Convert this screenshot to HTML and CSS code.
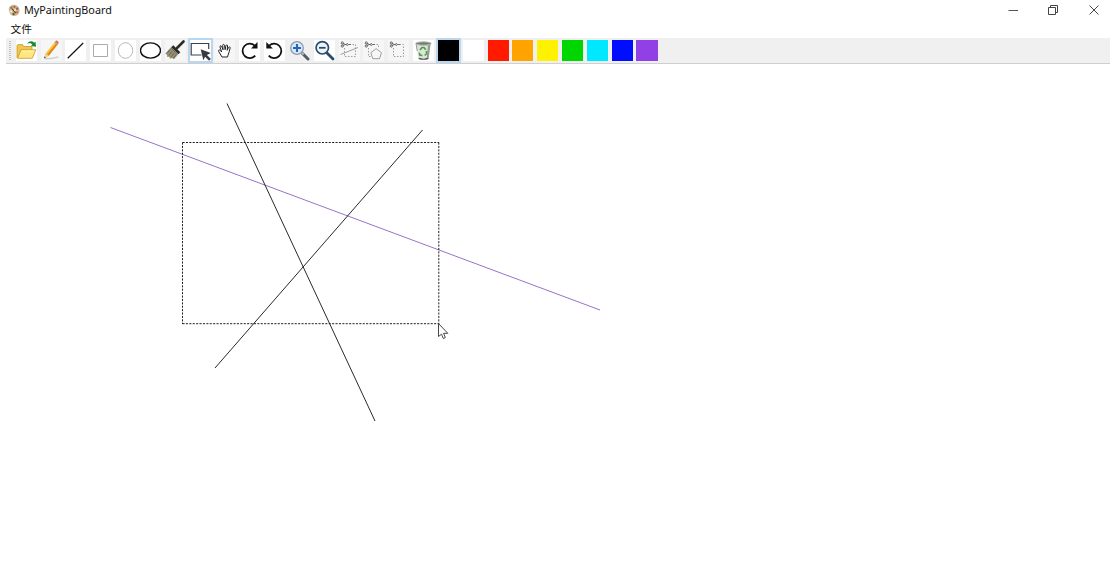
FILE: index.html
```
<!DOCTYPE html>
<html lang="zh">
<head>
<meta charset="utf-8">
<title>MyPaintingBoard</title>
<link rel="stylesheet" href="styles.css">
</head>
<body>
<header class="titlebar">
  <svg class="app-icon" viewBox="0 0 13 13"><path d="M6.5.4C3 .2.8 2.8.8 5.8c0 1.400 1 1.700.9 3 .2 2 2.300 3.700 4.900 3.700 3.300 0 5.900-2.500 5.900-6C12.500 3 10 .5 6.500.4z" fill="#d3b78e"/><circle cx="3.700" cy="3.500" r="1.300" fill="#6e8d60"/><circle cx="7" cy="2.500" r="1.200" fill="#b45a32"/><circle cx="10" cy="4.500" r="1.300" fill="#7b6480"/><circle cx="3.500" cy="7.500" r="1.200" fill="#f2eee5"/><circle cx="9.800" cy="8.400" r="1.300" fill="#cf7a58"/><circle cx="6" cy="10.400" r="1.200" fill="#4c5040"/><path d="M4.500 4.800l4 4.500" stroke="#6b3f2d" stroke-width="1.300"/><circle cx="7.500" cy="6" r="1" fill="#f7efe1"/></svg>
  <h1 class="title">MyPaintingBoard</h1>
  <div class="window-controls">
    <svg viewBox="0 0 12 12"><path d="M1.500 6.500h9.500" stroke="#555"/></svg>
    <svg viewBox="0 0 12 12" fill="none" stroke="#444"><path d="M1.500 3.500h7v7h-7zM3.500 3.500v-2h7v7h-2"/></svg>
    <svg viewBox="0 0 12 12"><path d="M1.500 1.500l9 9M10.500 1.500l-9 9" stroke="#444"/></svg>
  </div>
</header>
<nav class="menubar"><span>文件</span></nav>
<div class="toolbar">
  <div class="grip"></div>
  <div class="tool white"><svg viewBox="0 0 21 21"><path d="M1 18V5.500l1-1h4.500l1.300 2H16v4" fill="#efc64e" stroke="#bd911e" stroke-width=".7"/><path d="M1.500 18.300L5 9.800h14.800l-3.500 8.500z" fill="#ffe781" stroke="#c89b22" stroke-width=".8"/><path d="M5.800 11h12.300" stroke="#fff6bd"/><path d="M11.300 3.700C13.300.8 16.200.7 18 2.800l1.600-1.100.4 5-5-.8 1.400-1.300c-1.400-1.500-2.800-1.700-5.100-.9z" fill="#158b29"/></svg></div>
  <div class="tool pale"><svg viewBox="0 0 21 21"><path d="M4 18.800c5-.1 10-.9 13.300-2" stroke="#ccc" stroke-width="1.400" fill="none"/><path d="M3 18.500l1.600-4.900L14 1.700l3 2.300-9.300 11.800z" fill="#ffc335"/><path d="M5.900 14.800L15.600 3l1.400 1-9.300 11.800z" fill="#df861b"/><path d="M3 18.500l1.600-4.900 3.100 2.200z" fill="#eccda1"/><path d="M3 18.500l.6-2 1.200.9z" fill="#333"/><path d="M13.300 2.600l3 2.300.7-1-3-2.200z" fill="#aaa"/><path d="M14 1.700l.8-1 1.100-.1 1.600 1.300.1 1.100-.6 1z" fill="#db6a54"/></svg></div>
  <div class="tool white"><svg viewBox="0 0 21 21"><path d="M2.700 18.200L18.200 3" stroke="#111" stroke-width="1.200"/></svg></div>
  <div class="tool white"><svg viewBox="0 0 21 21"><path d="M3.500 4.500h14v12h-14z" fill="none" stroke="#aaa" stroke-width="1"/></svg></div>
  <div class="tool white"><svg viewBox="0 0 21 21"><ellipse cx="10.500" cy="10.500" rx="7.200" ry="7.800" fill="none" stroke="#b8b8b8"/></svg></div>
  <div class="tool white"><svg viewBox="0 0 21 21"><ellipse cx="10.500" cy="10.500" rx="10" ry="7.600" fill="none" stroke="#111" stroke-width="1.400"/></svg></div>
  <div class="tool pale"><svg viewBox="0 0 21 21"><path d="M12 8l6.500-6.500" stroke="#302c25" stroke-width="2.600" stroke-linecap="round"/><path d="M8.300 5.300l7 7-2 2-7.300-7z" fill="#2b2b28"/><path d="M6 7.200l7.300 7L9 19.300l-2-1.300-2 .8-.7-2-2.100.2-.2-2.200-1.800-1z" fill="#989076"/><path d="M6 8l6 5.800M5 9.300l-2.800 4M7 11l-3 4.500M9 13l-3 4M11 14.500L8.500 18" fill="none" stroke="#4d4b3e" stroke-width=".6"/></svg></div>
  <div class="tool white selected"><svg viewBox="0 0 21 21"><path d="M11.500 15H1.200V3.500h17.500V9" fill="none" stroke="#3d4048" stroke-width="1.200"/><path d="M10.700 9.200l10 3.900-3.800 1.900 4 4-1.800 1.800-4-4.100-1.800 3.500z" fill="#373a42"/></svg></div>
  <div class="tool pale"><svg viewBox="0 0 21 21"><path d="M8 17l-3.300-5.500c-.7-1.400.7-2 1.500-1.100l1.500 1.600L6 7c-.3-1.300 1.200-1.800 1.600-.6l1.500 3.400-.4-4.300c0-1.400 1.600-1.500 1.800-.1l.6 4.300.8-4c.4-1.300 1.800-1 1.700.3l-.4 4.300 1.300-2.800c.7-1.200 1.900-.6 1.600.7-.9 2.700-.9 4.500-2 6.700L13.500 17z" fill="#fff" stroke="#222" stroke-width="1"/></svg></div>
  <div class="tool white"><svg viewBox="0 0 21 21"><path d="M15.700 5.600A7.200 7.200 0 1 0 16.200 15.600" fill="none" stroke="#111" stroke-width="1.800"/><path d="M18.500 2v6.500H12z" fill="#111"/></svg></div>
  <div class="tool white"><svg viewBox="0 0 21 21"><path d="M5.200 5.600A7.200 7.200 0 1 1 4.700 15.600" fill="none" stroke="#111" stroke-width="1.800"/><path d="M2.300 2v6.500h6.500z" fill="#111"/></svg></div>
  <div class="tool"><svg viewBox="0 0 21 21"><path d="M13 13l6 6" stroke="#565a60" stroke-width="3" stroke-linecap="round"/><path d="M12.600 12.600l2 2" stroke="#c0c5ca" stroke-width="1.600"/><circle cx="8" cy="8" r="6.300" fill="#d9e9fa" stroke="#8c9cad" stroke-width="1.300"/><path d="M8 4v8M4 8h8" stroke="#2866ba" stroke-width="2.100"/></svg></div>
  <div class="tool white"><svg viewBox="0 0 21 21"><path d="M13 13l6 6" stroke="#294c6c" stroke-width="2.800" stroke-linecap="round"/><circle cx="8.300" cy="7.800" r="6.200" fill="#eef4f8" stroke="#294c6c" stroke-width="1.700"/><path d="M5 7.800h6.600" stroke="#294c6c" stroke-width="1.800"/></svg></div>
  <div class="tool pale"><svg viewBox="0 0 21 21"><g fill="none" stroke="#888" stroke-width=".8"><path d="M5.500 8v8.500h11V4.500h-6" stroke-dasharray="1.500 1.500"/><path d="M1.500 14.500L19 7.500"/><path d="M4 3.500l5 2M4 5.500l5-2M9 4.500h3" stroke="#555"/></g><circle cx="3.300" cy="3" r="1.100" fill="none" stroke="#444" stroke-width=".8"/><circle cx="3.300" cy="6" r="1.100" fill="none" stroke="#444" stroke-width=".8"/></svg></div>
  <div class="tool pale"><svg viewBox="0 0 21 21"><g fill="none" stroke="#888" stroke-width=".8"><path d="M5.500 8v8.500h3M10.500 4.500h5v3" stroke-dasharray="1.500 1.500"/><path d="M13.200 8.700l5.300 4-2 6h-6.700l-2-6z"/><path d="M4 3.500l5 2M4 5.500l5-2M9 4.500h3" stroke="#555"/></g><circle cx="3.300" cy="3" r="1.100" fill="none" stroke="#444" stroke-width=".8"/><circle cx="3.300" cy="6" r="1.100" fill="none" stroke="#444" stroke-width=".8"/></svg></div>
  <div class="tool pale"><svg viewBox="0 0 21 21"><g fill="none" stroke="#888" stroke-width=".8"><path d="M5.500 8v8.500h10V4.500h-5" stroke-dasharray="1.500 1.500"/><path d="M4 3.500l5 2M4 5.500l5-2M9 4.500h3" stroke="#555"/></g><circle cx="3.300" cy="3" r="1.100" fill="none" stroke="#444" stroke-width=".8"/><circle cx="3.300" cy="6" r="1.100" fill="none" stroke="#444" stroke-width=".8"/></svg></div>
  <div class="tool white"><svg viewBox="0 0 21 21"><path d="M3.200 4h14.400l-2 14.800c-2.300 1.300-8 1.300-10.200 0z" fill="#e0e3de"/><path d="M15 4h2.600l-2 14.800-2 .7z" fill="#999e98"/><path d="M3.200 4l1 7" stroke="#999"/><ellipse cx="10.400" cy="3.500" rx="7.700" ry="1.700" fill="#777b75" stroke="#babdb8"/><path d="M5.700 18.400c2.500.9 7 .9 9.500 0" fill="none" stroke="#555" stroke-width="1.200"/><path d="M7 10l2-2.500h2l1.700 2.300M13.500 11l.2 2.500-2 2M9.500 15.500l-2.600-.3-.6-2.600" fill="none" stroke="#46a63e" stroke-width="1.700"/></svg></div>
  <div class="tool swatch black selected"></div>
  <div class="tool swatch snow"></div>
  <div class="tool swatch red"></div>
  <div class="tool swatch orange"></div>
  <div class="tool swatch yellow"></div>
  <div class="tool swatch green"></div>
  <div class="tool swatch cyan"></div>
  <div class="tool swatch blue"></div>
  <div class="tool swatch purple"></div>
</div>
<main class="board">
  <svg class="canvas" viewBox="0 64 1118 499" fill="none">
    <path d="M110.500 127.500L600 310" stroke="#8659bd" stroke-width=".85"/>
    <path d="M227 103.500L375 421M422.500 130L215 368" stroke="#111" stroke-width=".9"/>
    <path d="M182.500 142.500h256.500M182.500 323.700h256.500M182.500 142.500v181.500M438.800 142.500v181.500" stroke="#222" stroke-dasharray="2.100 1.300"/>
    <path d="M438.500 323.500v13l3-2.300 1.800 4.300 2-1-1.700-4.200h4.200z" fill="#fff" stroke="#333" stroke-width=".9"/>
  </svg>
</main>
</body>
</html>
```

FILE: styles.css
```
* { box-sizing: border-box; }
body {
  margin: 0;
  height: 563px;
  display: flex;
  flex-direction: column;
  overflow: hidden;
  background: #fff;
  color: #111;
  font-family: "Noto Sans", "Noto Sans CJK SC", sans-serif;
}
.titlebar {
  height: 20px;
  display: flex;
  align-items: center;
  padding: 0 18.500px 0 8px;
}
.app-icon { width: 12px; height: 13px; }
.title {
  margin: 0 0 0 4px;
  font-size: 10.800px;
  font-weight: 400;
  line-height: 20px;
}
.window-controls {
  margin-left: auto;
  display: flex;
  gap: 28.500px;
}
.window-controls svg { width: 12px; height: 12px; }
.menubar {
  height: 18px;
  padding-left: 10.500px;
  font-family: "Noto Sans CJK SC", sans-serif;
  font-size: 10.700px;
  line-height: 18px;
}
.toolbar {
  height: 26px;
  margin: 0 8px 0 6px;
  padding-left: 3px;
  display: flex;
  align-items: center;
  background: #f0f0f0;
  border-bottom: 1px solid #cfcfcf;
}
.grip {
  width: 2px;
  height: 20px;
  margin-right: 2.900px;
  background: repeating-linear-gradient(#bdbdbd 0 1px, #f5f5f5 1px 2px);
}
.tool {
  flex: 0 0 24.830px;
  min-width: 0;
  height: 25px;
  padding: 2px 1.900px;
  background-clip: content-box;
}
.tool svg { display: block; width: 21px; height: 21px; }
.white { background-color: #fff; }
.pale { background-color: #f6f6f6; }
.selected { box-shadow: inset 0 0 0 2px #b9d7f0; }
.black { background-color: #000; }
.snow { background-color: #fff; }
.red { background-color: #ff1a00; }
.orange { background-color: #ffa300; }
.yellow { background-color: #fff200; }
.green { background-color: #00d600; }
.cyan { background-color: #00e8ff; }
.blue { background-color: #000dff; }
.purple { background-color: #9040e5; }
.board { flex: 1; min-height: 0; }
.canvas { display: block; width: 1118px; height: 499px; }
```
